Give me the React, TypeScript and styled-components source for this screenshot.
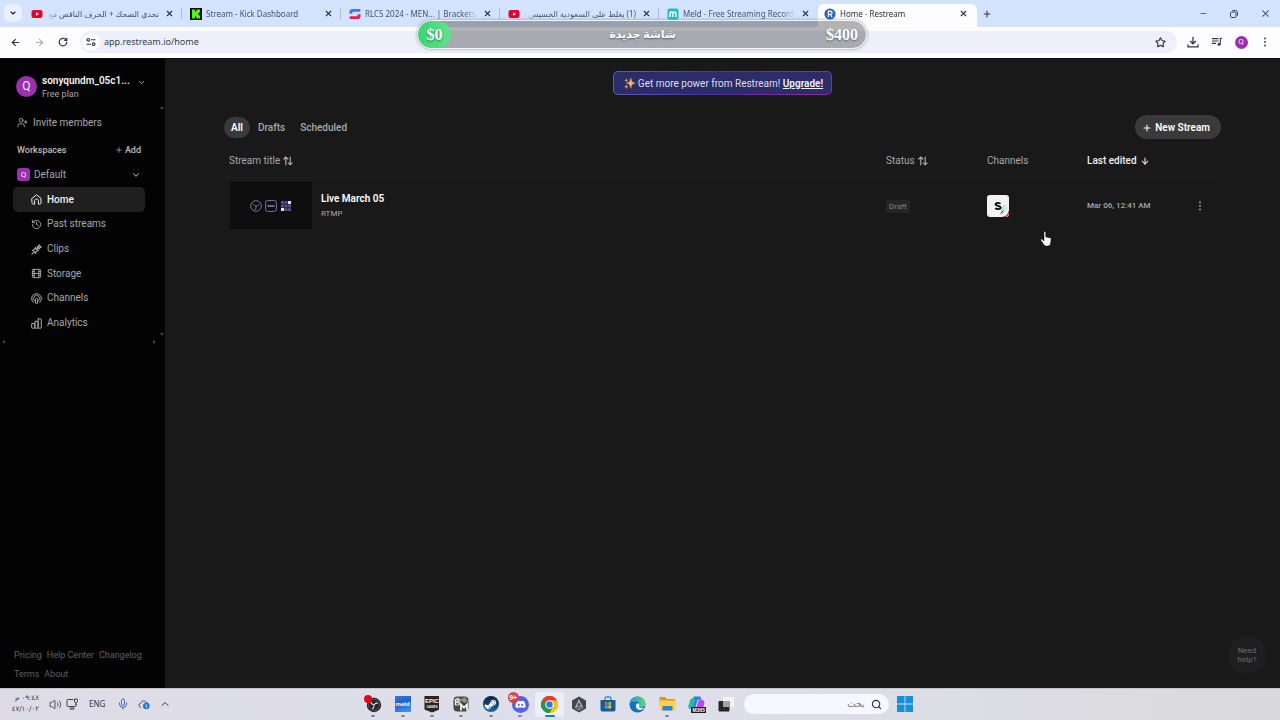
import React from "react";
import styled, { createGlobalStyle } from "styled-components";
import {
  ArrowDown,
  ArrowLeft,
  ArrowRight,
  ChevronDown,
  ChevronUp,
  Film,
  History,
  Mic,
  Minus,
  Plus,
  RotateCw,
  Search,
  Star,
  UserPlus,
  Volume2,
  X,
} from "lucide-react";
import { FaDiscord, FaSteamSymbol } from "react-icons/fa";

const GlobalStyle = createGlobalStyle`
  *, *::before, *::after { box-sizing: border-box; }
  body { margin: 0; background: #191919; }
  button, input { font: inherit; color: inherit; border: 0; padding: 0; margin: 0; background: none; }
  button { cursor: pointer; }
  svg { display: block; flex: none; }
`;

const ui = `Roboto, "Liberation Sans", sans-serif`;
const system = `"Noto Sans", "DejaVu Sans", sans-serif`;

const Screen = styled.div`
  position: relative;
  display: flex;
  flex-direction: column;
  min-height: 100vh;
  font-family: ${ui};
  font-size: 10px;
  line-height: 14px;
`;

/* ---------- browser ---------- */

const TabStrip = styled.div`
  display: flex;
  align-items: stretch;
  height: 27px;
  background: #d3e2fd;
  color: #46536b;
  font-family: ${system};
  font-size: 8px;
`;

const TabSearch = styled.button`
  display: grid;
  place-items: center;
  width: 18px;
  height: 18px;
  margin: 4px 1px 0 4px;
  border-radius: 6px;
  background: #e9f1fe;
  color: #1f1f1f;
`;

const Tab = styled.div<{ $active?: boolean }>`
  display: flex;
  align-items: center;
  gap: 4px;
  flex: 0 1 159px;
  min-width: 0;
  height: ${(p) => (p.$active ? "23px" : "27px")};
  margin-top: ${(p) => (p.$active ? "4px" : "0")};
  padding: ${(p) => (p.$active ? "0 8px 4px 6px" : "0 7px 0 8px")};
  border-radius: 6px 6px 0 0;
  background: ${(p) => (p.$active ? "#fdfdff" : "transparent")};
  color: ${(p) => (p.$active ? "#2a2d33" : "inherit")};
`;

const TabTitle = styled.span`
  flex: 1;
  min-width: 0;
  overflow: hidden;
  white-space: nowrap;
  mask-image: linear-gradient(to right, #000 88%, transparent);
  &[dir="rtl"] {
    mask-image: linear-gradient(to left, #000 88%, transparent);
  }
`;

const TabClose = styled.button`
  display: grid;
  place-items: center;
  width: 12px;
  height: 12px;
  color: #2f3542;
`;

const TabDivider = styled.span`
  width: 1px;
  height: 11px;
  margin: 8px 0 0 -1px;
  background: #a9bbdc;
`;

const NewTab = styled(TabClose)`
  width: 20px;
  height: 27px;
`;

const WindowButtons = styled.div`
  display: flex;
  align-items: center;
  gap: 17px;
  margin-left: auto;
  padding-right: 8px;
  button {
    display: grid;
    place-items: center;
    width: 14px;
    height: 14px;
    color: #39414f;
  }
`;

const Toolbar = styled.div`
  display: flex;
  align-items: center;
  height: 31px;
  padding: 0 3px 1px 8px;
  background: #fdfdff;
  color: #33363b;
`;

const ToolButton = styled.button<{ $dim?: boolean }>`
  display: grid;
  place-items: center;
  width: 24px;
  height: 22px;
  opacity: ${(p) => (p.$dim ? 0.4 : 1)};
`;

const NavButtons = styled.div`
  display: flex;
  margin-left: -5px;
`;

const Address = styled.form`
  display: flex;
  align-items: center;
  flex: 1;
  min-width: 0;
  height: 22px;
  margin: 0 4px 0 5px;
  padding: 0 5px 0 2px;
  border-radius: 11px;
  background: #edf0fa;
  input {
    flex: 1;
    min-width: 0;
    font-family: ${system};
    font-size: 9px;
    color: #3a3d44;
    outline: 0;
  }
`;

const SiteInfo = styled.span`
  display: grid;
  place-items: center;
  width: 18px;
  height: 18px;
  margin-right: 4px;
  border-radius: 50%;
  background: #fdfdff;
`;

const Round = styled.span<{ $size: number; $font: number; $square?: boolean }>`
  display: grid;
  place-items: center;
  flex: none;
  width: ${(p) => p.$size}px;
  height: ${(p) => p.$size}px;
  border-radius: ${(p) => (p.$square ? "3px" : "50%")};
  background: #9a30ad;
  color: #f6e9f8;
  font-size: ${(p) => p.$font}px;
  line-height: 1;
`;

/* ---------- donation goal ---------- */

const GoalLayer = styled.div`
  position: absolute;
  top: 20px;
  left: 4px;
  right: 0;
  display: flex;
  justify-content: center;
  pointer-events: none;
`;

const Goal = styled.div`
  display: flex;
  align-items: center;
  justify-content: space-between;
  width: 450px;
  height: 29px;
  padding-right: 8px;
  overflow: hidden;
  border: 1px solid #f4f5f7;
  border-radius: 15px;
  background: rgba(40, 40, 40, 0.35);
  box-shadow: 0 0 3px rgba(60, 60, 60, 0.5);
  color: #fff;
  font: bold 16px/20px "Liberation Serif", "DejaVu Sans", serif;
  text-shadow: 0 1px 2px rgba(0, 0, 0, 0.45);
`;

const GoalFill = styled.span`
  display: grid;
  place-items: center;
  width: 33px;
  height: 27px;
  border-radius: 14px;
  background: linear-gradient(90deg, #3cd473, #5be58d);
`;

const GoalName = styled.span`
  padding: 0 0 2px 8px;
  font-size: 11px;
`;

/* ---------- app ---------- */

const Body = styled.div`
  display: flex;
  flex: 1;
  border-top: 1px solid #0c0d10;
`;

const Sidebar = styled.aside`
  display: flex;
  flex-direction: column;
  flex: none;
  width: 165px;
  padding: 12px 20px 7px 14px;
  background: #030303;
  color: #a8a8a8;
`;

const Account = styled.button`
  display: flex;
  align-items: center;
  gap: 5px;
  height: 30px;
  padding-left: 2px;
  text-align: left;
`;

const AccountText = styled.span`
  display: flex;
  flex-direction: column;
  flex: 1;
  min-width: 0;
  padding-top: 2px;
  font-size: 9px;
  line-height: 12px;
  strong {
    font-size: 10px;
    line-height: 14px;
    font-weight: 600;
    color: #f2f2f2;
    white-space: nowrap;
  }
`;

const AccountArrow = styled.span`
  align-self: flex-start;
  margin: 7px -1px 0 0;
`;

const ScrollArea = styled.div`
  position: relative;
  margin: 0 -20px 0 -14px;
  padding: 10px 20px 11px 14px;
`;

const ScrollArrow = styled.i<{ $side: "up" | "down" | "left" | "right" }>`
  position: absolute;
  border: 2px solid transparent;
  ${(p) => p.$side === "up" && "right: 1px; top: 3px; border-bottom: 3px solid #444;"}
  ${(p) => p.$side === "down" && "right: 1px; bottom: 8px; border-top: 3px solid #444;"}
  ${(p) => p.$side === "left" && "left: 0; bottom: 2px; border-right: 3px solid #444;"}
  ${(p) => p.$side === "right" && "right: 7px; bottom: 2px; border-left: 3px solid #444;"}
`;

const Invite = styled.button`
  display: flex;
  align-items: center;
  gap: 5px;
  height: 22px;
  padding: 1px 0 0 3px;
`;

const SectionHead = styled.div`
  display: flex;
  align-items: center;
  justify-content: space-between;
  height: 16px;
  margin-top: 9px;
  padding: 0 4px 0 3px;
  font-size: 9px;
  color: #bdbdbd;
  h2 {
    margin: 0;
    font-size: 9px;
    font-weight: 500;
  }
  button {
    display: flex;
    align-items: center;
    gap: 2px;
    font-weight: 500;
  }
`;

const Workspace = styled.button`
  display: flex;
  align-items: center;
  gap: 4px;
  width: 100%;
  height: 20px;
  margin: 6px 0 3px;
  padding: 1px 4px 0 3px;
  > span:nth-child(2) {
    flex: 1;
    text-align: left;
  }
`;

const NavList = styled.nav`
  display: grid;
  grid-auto-rows: 1fr;
  height: 148px;
  margin-left: -1px;
`;

const NavItem = styled.a<{ $active?: boolean }>`
  display: flex;
  align-items: center;
  gap: 5px;
  padding: 1px 0 0 18px;
  border-radius: 5px;
  background: ${(p) => (p.$active ? "#1f1f1f" : "transparent")};
  color: ${(p) => (p.$active ? "#f0f0f0" : "#a8a8a8")};
  font-weight: ${(p) => (p.$active ? 500 : 400)};
  text-decoration: none;
`;

const FooterLinks = styled.nav`
  display: flex;
  flex-wrap: wrap;
  gap: 5px 5px;
  margin: auto -10px 0 0;
  a {
    color: #606060;
    font-size: 9px;
    line-height: 14px;
    text-decoration: none;
  }
`;

const Main = styled.main`
  position: relative;
  flex: 1;
  min-width: 0;
  padding: 12px 59px 0;
  background: #191919;
  color: #a8a8a8;
`;

const Banner = styled.div`
  display: flex;
  align-items: center;
  gap: 3px;
  width: max-content;
  height: 24px;
  margin: 0 auto 20px;
  padding: 1px 8px 0 10px;
  border: 1px solid transparent;
  border-radius: 5px;
  background: linear-gradient(#2b2c68, #2b2c68) padding-box,
    linear-gradient(90deg, #5660b8, #55309a 45%, #9a23a8) border-box;
  color: #dedeee;
  a {
    color: #f2f2fa;
    font-weight: 600;
  }
`;

const Controls = styled.div`
  display: flex;
  align-items: center;
  justify-content: space-between;
  height: 24px;
`;

const Filters = styled.div`
  display: flex;
  gap: 1px;
`;

const Filter = styled.button<{ $active?: boolean }>`
  height: 21px;
  padding: 1px 7px 0;
  border-radius: 11px;
  background: ${(p) => (p.$active ? "#3a3a3a" : "transparent")};
  color: ${(p) => (p.$active ? "#fff" : "#a8a8a8")};
  font-weight: ${(p) => (p.$active ? 600 : 500)};
`;

const NewStream = styled.button`
  display: flex;
  align-items: center;
  gap: 3px;
  height: 24px;
  padding: 2px 11px 0 7px;
  border-radius: 12px;
  background: #3a3a3a;
  color: #fff;
  font-weight: 600;
`;

const Streams = styled.table`
  width: 100%;
  margin-top: 4px;
  table-layout: fixed;
  border-collapse: collapse;
  th {
    height: 34px;
    padding: 2px 5px 0;
    border-bottom: 1px solid #212121;
    font-weight: 400;
    text-align: left;
  }
  td {
    height: 57px;
    padding: 0 5px;
    font-size: 9px;
  }
`;

const Col = styled.col<{ $width?: number }>`
  width: ${(p) => (p.$width ? `${p.$width}px` : "auto")};
`;

const SortButton = styled.button<{ $active?: boolean }>`
  display: flex;
  align-items: center;
  gap: 3px;
  color: ${(p) => (p.$active ? "#f0f0f0" : "inherit")};
  font-weight: ${(p) => (p.$active ? 500 : 400)};
`;

const StreamCell = styled.div`
  display: flex;
  align-items: center;
  gap: 9px;
  padding-left: 1px;
`;

const Thumb = styled.div`
  display: flex;
  align-items: center;
  justify-content: center;
  gap: 3px;
  width: 82px;
  height: 47px;
  background: #0e0e0e;
`;

const StreamText = styled.div`
  display: flex;
  flex-direction: column;
  gap: 1px;
  padding-top: 2px;
  strong {
    color: #fff;
    font-size: 10px;
    font-weight: 600;
  }
  span {
    font-size: 8px;
    line-height: 14px;
  }
`;

const Edited = styled.time`
  font-size: 8px;
  font-weight: 500;
`;

const Draft = styled.span`
  display: inline-block;
  padding: 0 3px;
  border-radius: 2px;
  background: #252525;
  color: #727272;
  font-size: 8px;
  line-height: 13px;
  font-weight: 500;
`;

const MenuButton = styled.button`
  display: grid;
  place-items: center;
  width: 16px;
  height: 16px;
  margin: 0 auto;
`;

const Help = styled.button`
  position: absolute;
  right: 14px;
  bottom: 14px;
  width: 38px;
  height: 38px;
  border-radius: 50%;
  background: #1f1f1f;
  color: #6a6a6a;
  font-size: 8px;
  line-height: 9px;
`;

const Pointer = styled.svg`
  position: absolute;
  left: 875px;
  top: 172px;
`;

/* ---------- taskbar ---------- */

const Taskbar = styled.footer`
  display: grid;
  grid-template-columns: 1fr auto 1fr;
  align-items: center;
  height: 32px;
  padding: 0 9px 1px 0;
  border-top: 1px solid #c4c4ca;
  background: linear-gradient(90deg, #dddce6, #dfdfec 50%, #dadadc);
  color: #33343a;
  font-family: ${system};
`;

const Tray = styled.div`
  display: flex;
  align-items: center;
  padding-left: 12px;
`;

const Clock = styled.div`
  width: 27px;
  margin-right: 10px;
  font-family: "DejaVu Sans", sans-serif;
  font-size: 7px;
  line-height: 11px;
  white-space: nowrap;
  text-align: right;
`;

const TrayIcons = styled.div`
  display: flex;
  align-items: center;
  gap: 4px;
`;

const Language = styled.span`
  margin: 0 12px 0 11px;
  font-size: 8px;
`;

const TrayExtras = styled(TrayIcons)`
  gap: 9px;
`;

const Dock = styled.div`
  display: flex;
  align-items: center;
  height: 30px;
`;

const Apps = styled.div`
  display: flex;
  width: 382px;
`;

const AppButton = styled.button<{ $state?: "open" | "active" }>`
  position: relative;
  display: grid;
  place-items: center;
  flex: 1;
  height: 25px;
  border-radius: 3px;
  background: ${(p) => (p.$state === "active" ? "#eeeef8" : "transparent")};
  &::after {
    content: "";
    position: absolute;
    bottom: 0;
    width: ${(p) => (p.$state === "active" ? "10px" : "4px")};
    height: 2px;
    border-radius: 1px;
    background: ${(p) => (p.$state === "active" ? "#1c7cc4" : p.$state ? "#85858d" : "transparent")};
  }
`;

const SearchBox = styled.label`
  display: flex;
  align-items: center;
  gap: 6px;
  width: 145px;
  height: 20px;
  margin: 0 8px 0 3px;
  padding: 0 7px;
  border-radius: 10px;
  background: #f5f8fc;
  input {
    flex: 1;
    min-width: 0;
    font-family: "DejaVu Sans", sans-serif;
    font-size: 9px;
    outline: 0;
  }
`;

/* ---------- drawings ---------- */

const YouTube = () => (
  <svg width="12" height="12" viewBox="0 0 12 12">
    <rect x="0.5" y="2" width="11" height="8" rx="2" fill="#e3052d" />
    <path d="M5 4.2v3.6L8 6z" fill="#fff" />
  </svg>
);
const Kick = () => (
  <svg width="12" height="12" viewBox="0 0 12 12">
    <rect width="12" height="12" fill="#0b0f08" />
    <path d="M2 1.5h3v2.2h1V2.6h1V1.5h3v3H9v1H8v1h1v1h1v3H7V9.4H6V8.3H5v2.2H2z" fill="#51f51c" />
  </svg>
);
const StartGG = () => (
  <svg width="12" height="12" viewBox="0 0 12 12">
    <path d="M0.5 5.8V3.6C.5 2 1.6 1 3 1h8.3v2.8H4.2c-.6 0-.9.4-.9 1v1z" fill="#3d7bea" />
    <path d="M11.5 6.2v2.2c0 1.6-1.1 2.6-2.5 2.6H.7V8.2h7.1c.6 0 .9-.4.9-1v-1z" fill="#e8214f" />
  </svg>
);
const Meld = () => (
  <svg width="12" height="12" viewBox="0 0 12 12">
    <defs>
      <linearGradient id="meld" x2="1" y2="1">
        <stop stopColor="#25b9dd" />
        <stop offset="1" stopColor="#19c5c3" />
      </linearGradient>
    </defs>
    <rect x="0.5" y="0.5" width="11" height="11" rx="2" fill="url(#meld)" />
    <path d="M3 9V5.2c0-1.6 2.8-1.6 2.8 0V9M5.8 5.2c0-1.6 3-1.6 3 0V9" fill="none" stroke="#fff" strokeWidth="1.5" />
  </svg>
);
const RestreamIcon = () => (
  <svg width="12" height="12" viewBox="0 0 12 12">
    <circle cx="6" cy="6" r="5.6" fill="#2a62d8" />
    <path d="M4.4 9V3.2h2c2.2 0 2.2 3.1 0 3.1h-2M6.3 6.3L8 9" fill="none" stroke="#fff" strokeWidth="1.2" />
  </svg>
);
const Restore = () => (
  <svg width="8" height="8" viewBox="0 0 8 8" fill="none" stroke="currentColor" strokeWidth="1">
    <rect x="0.5" y="2" width="5.5" height="5.5" rx="1.3" />
    <path d="M2.3 .6H5.5c1.2 0 2 .8 2 2v3" />
  </svg>
);
const Tune = () => (
  <svg width="10" height="10" viewBox="0 0 10 10" fill="none" stroke="currentColor" strokeWidth="1.1">
    <circle cx="2.3" cy="2.8" r="1.3" />
    <path d="M5 2.8h4.5M.5 7.2H5" />
    <circle cx="7.7" cy="7.2" r="1.3" />
  </svg>
);
const DownloadTray = () => (
  <svg width="12" height="12" viewBox="0 0 12 12" fill="none" stroke="currentColor" strokeWidth="1.3">
    <path d="M6 1v6.6M3.2 5L6 7.8 8.8 5M1 8.4v2.4h10V8.4" />
  </svg>
);
const QueueMusic = () => (
  <svg width="12" height="12" viewBox="0 0 12 12" fill="none" stroke="currentColor" strokeWidth="1.1">
    <path d="M1 2.6h6.5M1 5h6.5M1 7.4h4M11.2 2.2H9.3v6.2" />
    <circle cx="8" cy="8.4" r="1.4" fill="currentColor" stroke="none" />
  </svg>
);
const Dots = () => (
  <svg width="10" height="10" viewBox="0 0 10 10" fill="currentColor">
    <circle cx="5" cy="1.5" r="0.9" />
    <circle cx="5" cy="5" r="0.9" />
    <circle cx="5" cy="8.5" r="0.9" />
  </svg>
);
const line = { fill: "none", stroke: "currentColor", strokeWidth: 1, strokeLinecap: "round", strokeLinejoin: "round" } as const;
const HomeIcon = () => (
  <svg width="11" height="11" viewBox="0 0 11 11" {...line}>
    <path d="M1 4.4L5.5.8 10 4.4v4.4c0 .8-.5 1.3-1.3 1.3H7.4V6.7c0-2.3-3.8-2.3-3.8 0v3.4H2.3C1.5 10.1 1 9.6 1 8.8z" />
  </svg>
);
const ClipsIcon = () => (
  <svg width="11" height="11" viewBox="0 0 11 11" {...line}>
    <path d="M4.4 3.6l1 1.9 1.9 1-1.9 1-1 1.9-1-1.9-1.9-1 1.9-1zM8.2.9l.7 1.3 1.3.7-1.3.7-.7 1.3-.7-1.3-1.3-.7 1.3-.7zM.9 10.2l1.6-1.6M6 5l1-1" strokeWidth="1.2" />
  </svg>
);
const ChannelsIcon = () => (
  <svg width="11" height="11" viewBox="0 0 11 11" {...line}>
    <path d="M2.3 9.3a4.9 4.9 0 1 1 6.4 0M3.3 7.7a3.1 3.1 0 1 1 4.4 0M4.4 9.8V6.5c0-1.6 2.2-1.6 2.2 0v3.3z" />
  </svg>
);
const AnalyticsIcon = () => (
  <svg width="11" height="11" viewBox="0 0 11 11" {...line}>
    <rect x="0.7" y="5.5" width="3.2" height="4.7" rx="0.5" />
    <rect x="3.9" y="3.3" width="3.2" height="6.9" rx="0.5" />
    <rect x="7.1" y="0.9" width="3.2" height="9.3" rx="0.5" />
  </svg>
);
const SortIcon = () => (
  <svg width="10" height="10" viewBox="0 0 10 10" {...line} strokeWidth={1.2}>
    <path d="M2.8 8.8V1M.8 3l2-2 2 2M7.2 1v7.8M5.3 6.9l1.9 1.9 1.9-1.9" />
  </svg>
);
const Sparkles = () => (
  <svg width="11" height="11" viewBox="0 0 11 11">
    <path d="M6.800.2c.7 3.200 1.400 4.200 4.200 4.900-2.800.7-3.500 1.700-4.200 5-.7-3.300-1.400-4.300-4.200-5 2.800-.7 3.500-1.700 4.200-4.900z" fill="#f8b45f" stroke="#f8b45f" strokeWidth="0.5" />
    <path d="M2.300 6.600c.2 1.300.6 1.700 1.800 2.100-1.200.4-1.600.8-1.800 2.100C2.100 9.500 1.700 9.100.5 8.700c1.200-.4 1.600-.8 1.800-2.100zM2.300.6c.2 1.100.5 1.500 1.600 1.800-1.100.3-1.400.7-1.600 1.800C2.100 3.100 1.800 2.700.7 2.400c1.100-.3 1.400-.7 1.600-1.800z" fill="#dd9884" stroke="#dd9884" strokeWidth="0.3" />
  </svg>
);
const ThumbArt = () => (
  <>
    <svg width="12" height="12" viewBox="0 0 12 12" fill="none" stroke="#7776a0" strokeWidth="1">
      <circle cx="6" cy="6" r="5.3" />
      <path d="M6 6.3C4.8 5.9 3.7 4.9 2.8 3.7M6 6.3c1.4-.3 2.3-1.3 3.4-2.1M6 6.3c.3 1.4-.3 2.5-1 3.5" />
    </svg>
    <svg width="12" height="12" viewBox="0 0 12 12" fill="none" stroke="#7776a0">
      <rect x="0.6" y="0.6" width="10.8" height="10.8" rx="2" />
      <path d="M2.5 6h7" strokeWidth="1.8" strokeDasharray="1.6 .3" />
    </svg>
    <svg width="12" height="12" viewBox="0 0 12 12">
      <rect x="1" y="1" width="10" height="10" fill="#55528c" />
      <path d="M4.3 1v10M7.7 1v10M1 4.3h10M1 7.7h10" stroke="#201f38" strokeWidth="0.8" />
      <path d="M1 8h3v3H1zM8 1h3v3H8z" fill="#e4e3f5" />
    </svg>
  </>
);
const ChannelBadge = () => (
  <svg width="22" height="22" viewBox="0 0 22 22">
    <rect width="22" height="22" rx="3" fill="#f3f3f3" />
    <path d="M13.3 8.9c-.7-1.4-4.6-1.5-4.7.4-.1 2 5 1.1 5 3.3 0 2-4.400 2-5.200.2" fill="none" stroke="#0b0b0b" strokeWidth="1.9" />
    <path d="M16 22a6 6 0 0 0 6-6" fill="none" stroke="#c83a5a" strokeWidth="1.5" />
    <path d="M18.500 10c-3 2-2.500 4-4 6.500" fill="none" stroke="#7fe3dc" strokeWidth="1.4" />
    <path d="M19.700 12c-.4 4-3 4-5.500 7.500" fill="none" stroke="#8fd9d6" strokeWidth="1" />
    <path d="M13.500 18.500l3-2.800" stroke="#333" strokeWidth="1" />
  </svg>
);
const HandPointer = () => (
  <Pointer width="12" height="16" viewBox="0 0 12 16" aria-hidden="true">
    <path d="M4 1.300C4 .2 5.800.2 5.800 1.300V6l3.900.7c1 .2 1.500.8 1.400 1.800l-.5 3.600c-.2 1.900-1.300 2.900-3 2.900H6.300c-1 0-1.800-.5-2.400-1.300L1 9.400c-.6-1 .6-1.700 1.400-1L4 10z" fill="#fff" stroke="#111" strokeWidth="0.5" />
  </Pointer>
);

const ObsApp = () => (
  <svg width="20" height="18" viewBox="0 0 20 18">
    <circle cx="11" cy="10" r="7.2" fill="#28262b" />
    <circle cx="11" cy="10" r="5.6" fill="none" stroke="#55535a" />
    <path d="M11 10C9 9.600 8 8.400 7.800 6.700M11 10c1-1.800 2.300-2.200 4-1.700M11 10c.3 2-.3 3.100-1.800 4" fill="none" stroke="#d6d4d9" strokeWidth="1.1" />
    <circle cx="5" cy="4" r="4" fill="#e00b12" />
  </svg>
);
const Lettered = styled.span<{ $bg: string; $size: number }>`
  display: grid;
  place-items: center;
  width: 16px;
  height: 16px;
  overflow: hidden;
  background: ${(p) => p.$bg};
  color: #fff;
  font: bold ${(p) => p.$size}px/1 "Liberation Sans", sans-serif;
`;
const Epic = styled.span`
  display: flex;
  flex-direction: column;
  align-items: center;
  width: 15px;
  height: 17px;
  padding-top: 2px;
  background: #252525;
  clip-path: polygon(0 0, 100% 0, 100% 82%, 50% 100%, 0 82%);
  color: #f2f2f2;
  font: bold 6px/7px "Liberation Sans Narrow", "Liberation Sans", sans-serif;
  small {
    font-size: 3px;
    line-height: 4px;
  }
`;
const BmApp = () => (
  <svg width="16" height="16" viewBox="0 0 16 16">
    <rect x="0.5" y="0.5" width="15" height="15" rx="4" fill="#45463f" />
    <path d="M1 4l4-3 3 2 4-2 3 4-3 2-4-2-4 3z" fill="#8c9086" />
    <path d="M2.500 3v6h2.600c1.800 0 1.800-2.900 0-2.900H2.700h2c1.700 0 1.700-2.900 0-2.900H2.500" fill="none" stroke="#ecebe4" strokeWidth="1.2" />
    <path d="M8 14.500V8.500l3 3.300 3-3.300v6" fill="none" stroke="#fff" strokeWidth="1.7" />
  </svg>
);
const SteamBadge = styled.span`
  display: grid;
  place-items: center;
  width: 16px;
  height: 16px;
  border-radius: 50%;
  background: linear-gradient(#11203f, #176aa5);
  color: #fff;
`;
const DiscordBadge = styled(SteamBadge)`
  position: relative;
  width: 17px;
  height: 17px;
  background: #5562e8;
  b {
    position: absolute;
    left: -4px;
    top: -4px;
    display: grid;
    place-items: center;
    width: 11px;
    height: 11px;
    border-radius: 50%;
    background: #d8404a;
    font: bold 7px/1 "Liberation Sans", sans-serif;
  }
`;
const Chrome = () => (
  <svg width="17" height="17" viewBox="0 0 48 48">
    <path d="M24 24L3.200 12A24 24 0 0 1 44.800 12z" fill="#e33b2e" />
    <path d="M24 24L44.800 12A24 24 0 0 1 24 48z" fill="#fbc116" />
    <path d="M24 24V48A24 24 0 0 1 3.200 12z" fill="#279847" />
    <path d="M24 12h20.800A24 24 0 0 1 24 48l10.400-18z" fill="#fbc116" />
    <path d="M3.200 12l10.400 18c3 4 7 6 10.400 6l10.400-6L24 48A24 24 0 0 1 3.200 12z" fill="#279847" />
    <path d="M3.200 12A24 24 0 0 1 44.800 12H24l-10.400 6z" fill="#e33b2e" />
    <circle cx="24" cy="24" r="12" fill="#fff" />
    <circle cx="24" cy="24" r="9" fill="#3277df" />
  </svg>
);
const HexApp = () => (
  <svg width="16" height="17" viewBox="0 0 16 17">
    <path d="M8 .5l7 4v8l-7 4-7-4v-8z" fill="#43474c" />
    <path d="M8 3l4.300 9L8 10.300 3.700 12z" fill="#b4b9be" />
    <path d="M8 6l2 4.300-2-.8-2 .8z" fill="#43474c" />
    <path d="M3.700 12.500L8 11l4.300 1.500L8 14.800z" fill="#73787e" />
  </svg>
);
const StoreApp = () => (
  <svg width="16" height="16" viewBox="0 0 16 16">
    <path d="M5 4V2.500C5 1.500 5.500 1 6.400 1h3.200c.9 0 1.400.5 1.400 1.500V4" fill="none" stroke="#2197d8" strokeWidth="1.3" />
    <path d="M.5 4h15v9.500c0 1.300-.7 2-2 2h-11c-1.300 0-2-.7-2-2z" fill="#145b98" />
    <path d="M4.800 6h2.900v2.900H4.800z" fill="#ef5b36" />
    <path d="M8.300 6h2.900v2.900H8.300z" fill="#8ac53e" />
    <path d="M4.800 9.500h2.900v2.900H4.800z" fill="#35b5ec" />
    <path d="M8.300 9.500h2.900v2.900H8.300z" fill="#fbc62d" />
  </svg>
);
const Edge = () => (
  <svg width="17" height="17" viewBox="0 0 17 17">
    <defs>
      <linearGradient id="edgeTop" x2="1">
        <stop stopColor="#2397df" />
        <stop offset="1" stopColor="#5ed66d" />
      </linearGradient>
    </defs>
    <circle cx="8.5" cy="8.5" r="8" fill="#1671bf" />
    <path d="M.6 8C1 3.300 4.600.5 8.600.5c4.600 0 7.900 3.300 7.900 6.900 0 2.600-1.900 4-4 4-1.700 0-2.700-.6-2.400-1.300 1.600-2.200-.1-4.500-2.700-4.500C4 5.600 1.600 6.400.6 8z" fill="url(#edgeTop)" />
    <path d="M10 10.200c.4 1.700 2.900 2.500 5.300 1.500-1 1.400-2.300 2.200-4 2.200-3 0-5-2.500-4.300-5 .5-1.300 1.700-1.900 2.800-1.500.9.500.9 1.700.2 2.800z" fill="#e2eefb" />
  </svg>
);
const Folder = () => (
  <svg width="17" height="16" viewBox="0 0 17 16">
    <path d="M.5 2c0-.7.300-1 1-1h4.700l1.600 2H15c.8 0 1.300.5 1.300 1.200V8H.5z" fill="#d79a1c" />
    <path d="M.5 4.500h16V13c0 .9-.5 1.400-1.400 1.400H1.900C1 14.400.5 13.900.5 13z" fill="#fbd04f" />
    <path d="M3.500 14.400v-3.200c0-.8.500-1.200 1.200-1.200h7.600c.7 0 1.200.4 1.200 1.200v3.200z" fill="#2587c4" />
  </svg>
);
const CopilotTile = styled.span`
  position: relative;
  display: block;
  b {
    position: absolute;
    right: -1px;
    bottom: 0;
    padding: 0 1px;
    background: #1b1b1b;
    color: #fff;
    font: bold 5px/6px "Liberation Sans", sans-serif;
  }
`;
const Copilot = () => (
  <svg width="17" height="17" viewBox="0 0 17 17">
    <path d="M5 2.300C5.400 1 6 .6 7.200.6h4c1 0 1.500.6 1.800 1.700l.4 1.500H9.600L7 13H3C1 13 .2 11.500.6 9.500z" fill="#2382e8" />
    <path d="M.6 9.500L2 4.500C2.400 3.200 3.200 2.600 4.500 2.600h3L5.200 11c-.4 1.500-1 2-2.200 2C1 13 .2 11.500.6 9.500z" fill="#30b8a2" />
    <path d="M13 3.800c2.700 0 3.900 1.400 3.300 3.800l-1.300 5.200c-.4 1.400-1.100 2.200-2.600 2.200H7.500l2.600-9.300c.4-1.300 1.200-1.900 2.900-1.900z" fill="#c14bd6" />
    <path d="M5 11h8l-1 4H7c-1.300 0-2.200-2-2-4z" fill="#ee6c75" />
  </svg>
);
const TaskView = () => (
  <svg width="16" height="16" viewBox="0 0 16 16">
    <rect x="5" y="1" width="11" height="10" rx="1" fill="#f4f4f4" />
    <rect x="0.5" y="5" width="11" height="10.5" rx="1" fill="#262626" />
    <path d="M5 5h6.500v6H5z" fill="#a4a4a4" />
  </svg>
);
const WindowsLogo = () => (
  <svg width="16" height="16" viewBox="0 0 16 16">
    <path d="M0 0h7.600v7.600H0zM8.400 0H16v7.600H8.400zM0 8.400h7.600V16H0zM8.400 8.400H16V16H8.400z" fill="#1890d8" />
  </svg>
);
const NetworkIcon = () => (
  <svg width="12" height="12" viewBox="0 0 12 12" fill="none" stroke="currentColor" strokeWidth="0.9">
    <path d="M7.500 1.500H2c-.7 0-1 .3-1 1v5c0 .7.300 1 1 1h7c.6 0 1-.3 1-1V6M3.500 11h5M5 8.500V11M7 8.500V11M8.500 1h2.800v2.700c0 1.500-2.800 1.500-2.800 0zM9.900 5v2" />
  </svg>
);
const CloudIcon = () => (
  <svg width="12" height="12" viewBox="0 0 12 12">
    <path d="M3 9.300C.2 9.300.2 5.800 2.600 5.600 3 2.500 7.500 2 8.600 4.900c1.400 0 2.300.8 2.400 2" fill="none" stroke="#54565e" />
    <circle cx="8.3" cy="8" r="3.3" fill="#1b7fd0" />
    <path d="M8.300 7.500v2.300M8.300 6.100v.8" stroke="#fff" strokeWidth="0.8" />
  </svg>
);

/* ---------- data ---------- */

const tabs = [
  { title: "تحدي الضحك + الحرف الناقص مع", icon: <YouTube />, rtl: true },
  { title: "Stream - Kick Dashboard", icon: <Kick /> },
  { title: "RLCS 2024 - MEN... | Brackets", icon: <StartGG /> },
  { title: "(1) يغلط على السعودية الخسيس ا", icon: <YouTube />, rtl: true },
  { title: "Meld - Free Streaming Recordi", icon: <Meld /> },
  { title: "Home - Restream", icon: <RestreamIcon />, active: true },
];

const nav = [
  { label: "Home", icon: <HomeIcon />, active: true },
  { label: "Past streams", icon: <History size={11} /> },
  { label: "Clips", icon: <ClipsIcon /> },
  { label: "Storage", icon: <Film size={11} /> },
  { label: "Channels", icon: <ChannelsIcon /> },
  { label: "Analytics", icon: <AnalyticsIcon /> },
];

const apps: { name: string; icon: React.ReactNode; state?: "open" | "active" }[] = [
  { name: "OBS Studio", icon: <ObsApp />, state: "open" },
  { name: "Meld", icon: <Lettered $bg="linear-gradient(160deg,#2f7fd8,#2560c8 40%,#3aa0e8)" $size={6}>meld</Lettered>, state: "open" },
  { name: "Epic Games", icon: <Epic>EPIC<small>GAMES</small></Epic>, state: "open" },
  { name: "BakkesMod", icon: <BmApp />, state: "open" },
  { name: "Steam", icon: <SteamBadge><FaSteamSymbol size={13} /></SteamBadge>, state: "open" },
  { name: "Discord", icon: <DiscordBadge><FaDiscord size={11} /><b>9+</b></DiscordBadge>, state: "open" },
  { name: "Chrome", icon: <Chrome />, state: "active" },
  { name: "Launcher", icon: <HexApp /> },
  { name: "Microsoft Store", icon: <StoreApp /> },
  { name: "Edge", icon: <Edge /> },
  { name: "File Explorer", icon: <Folder />, state: "open" },
  { name: "Microsoft 365 Copilot", icon: <CopilotTile><Copilot /><b>M365</b></CopilotTile> },
  { name: "Task View", icon: <TaskView /> },
];

export default function App() {
  return (
    <Screen>
      <GlobalStyle />
      <TabStrip>
        <TabSearch aria-label="Search tabs"><ChevronDown size={8} strokeWidth={3.5} /></TabSearch>
        {tabs.map((t, i) => (
          <React.Fragment key={t.title}>
            <Tab $active={t.active}>
              {t.icon}
              <TabTitle dir={t.rtl ? "rtl" : "ltr"}>{t.title}</TabTitle>
              <TabClose aria-label="Close tab"><X size={9} strokeWidth={3} /></TabClose>
            </Tab>
            {i < 4 && <TabDivider />}
          </React.Fragment>
        ))}
        <NewTab aria-label="New tab"><Plus size={10} strokeWidth={2.5} /></NewTab>
        <WindowButtons>
          <button aria-label="Minimize"><Minus size={9} /></button>
          <button aria-label="Restore"><Restore /></button>
          <button aria-label="Close"><X size={11} strokeWidth={2.2} /></button>
        </WindowButtons>
      </TabStrip>
      <Toolbar>
        <NavButtons>
          <ToolButton aria-label="Back"><ArrowLeft size={11} strokeWidth={2.5} /></ToolButton>
          <ToolButton aria-label="Forward" $dim><ArrowRight size={11} strokeWidth={2.5} /></ToolButton>
          <ToolButton aria-label="Reload"><RotateCw size={10} strokeWidth={3} /></ToolButton>
        </NavButtons>
        <Address>
          <SiteInfo><Tune /></SiteInfo>
          <input aria-label="Address" defaultValue="app.restream.io/home" />
          <ToolButton type="button" aria-label="Bookmark"><Star size={11} strokeWidth={2.5} /></ToolButton>
        </Address>
        <ToolButton aria-label="Downloads"><DownloadTray /></ToolButton>
        <ToolButton aria-label="Media"><QueueMusic /></ToolButton>
        <ToolButton aria-label="Profile"><Round $size={13} $font={8}>Q</Round></ToolButton>
        <ToolButton aria-label="Menu"><Dots /></ToolButton>
      </Toolbar>

      <Body>
        <Sidebar>
          <Account>
            <Round $size={21} $font={12}>Q</Round>
            <AccountText>
              <strong>sonyqundm_05c1...</strong>
              Free plan
            </AccountText>
            <AccountArrow><ChevronDown size={9} strokeWidth={2.5} /></AccountArrow>
          </Account>
          <ScrollArea>
            <Invite><UserPlus size={11} />Invite members</Invite>
            <SectionHead>
              <h2>Workspaces</h2>
              <button><Plus size={8} />Add</button>
            </SectionHead>
            <Workspace>
              <Round $size={13} $font={8} $square>Q</Round>
              <span>Default</span>
              <ChevronDown size={10} strokeWidth={2.5} />
            </Workspace>
            <NavList>
              {nav.map((n) => (
                <NavItem key={n.label} href="#" $active={n.active}>{n.icon}{n.label}</NavItem>
              ))}
            </NavList>
            <ScrollArrow $side="up" />
            <ScrollArrow $side="down" />
            <ScrollArrow $side="left" />
            <ScrollArrow $side="right" />
          </ScrollArea>
          <FooterLinks>
            {["Pricing", "Help Center", "Changelog", "Terms", "About"].map((l) => (
              <a key={l} href="#">{l}</a>
            ))}
          </FooterLinks>
        </Sidebar>

        <Main>
          <Banner>
            <Sparkles />
            <span>Get more power from Restream! <a href="#">Upgrade!</a></span>
          </Banner>
          <Controls>
            <Filters>
              <Filter $active>All</Filter>
              <Filter>Drafts</Filter>
              <Filter>Scheduled</Filter>
            </Filters>
            <NewStream><Plus size={10} strokeWidth={2.5} />New Stream</NewStream>
          </Controls>
          <Streams>
            <colgroup>
              <Col />
              <Col $width={101} />
              <Col $width={100} />
              <Col $width={96} />
              <Col $width={43} />
            </colgroup>
            <thead>
              <tr>
                <th><SortButton>Stream title<SortIcon /></SortButton></th>
                <th><SortButton>Status<SortIcon /></SortButton></th>
                <th>Channels</th>
                <th><SortButton $active>Last edited<ArrowDown size={10} strokeWidth={2.5} /></SortButton></th>
                <th aria-label="Actions" />
              </tr>
            </thead>
            <tbody>
              <tr>
                <td>
                  <StreamCell>
                    <Thumb><ThumbArt /></Thumb>
                    <StreamText>
                      <strong>Live March 05</strong>
                      <span>RTMP</span>
                    </StreamText>
                  </StreamCell>
                </td>
                <td><Draft>Draft</Draft></td>
                <td><ChannelBadge /></td>
                <td><Edited>Mar 06, 12:41 AM</Edited></td>
                <td><MenuButton aria-label="Stream menu"><Dots /></MenuButton></td>
              </tr>
            </tbody>
          </Streams>
          <HandPointer />
          <Help>Need help?</Help>
        </Main>
      </Body>

      <Taskbar>
        <Tray>
          <Clock dir="rtl">
            <div>٠٩:٤٨ م</div>
            <div>٤٧/١٠/٠٢</div>
          </Clock>
          <TrayIcons><Volume2 size={13} strokeWidth={1.5} /><NetworkIcon /></TrayIcons>
          <Language>ENG</Language>
          <TrayExtras>
            <Mic size={12} color="#4a68b4" />
            <CloudIcon />
            <ChevronUp size={12} />
          </TrayExtras>
        </Tray>
        <Dock>
          <Apps>
            {apps.map((a) => (
              <AppButton key={a.name} aria-label={a.name} $state={a.state}>{a.icon}</AppButton>
            ))}
          </Apps>
          <SearchBox>
            <input dir="rtl" aria-label="بحث" placeholder="بحث" />
            <Search size={11} strokeWidth={2.5} />
          </SearchBox>
          <WindowsLogo />
        </Dock>
      </Taskbar>

      <GoalLayer>
        <Goal>
          <GoalFill>$0</GoalFill>
          <GoalName dir="rtl">شاشة جديدة</GoalName>
          <span>$400</span>
        </Goal>
      </GoalLayer>
    </Screen>
  );
}
